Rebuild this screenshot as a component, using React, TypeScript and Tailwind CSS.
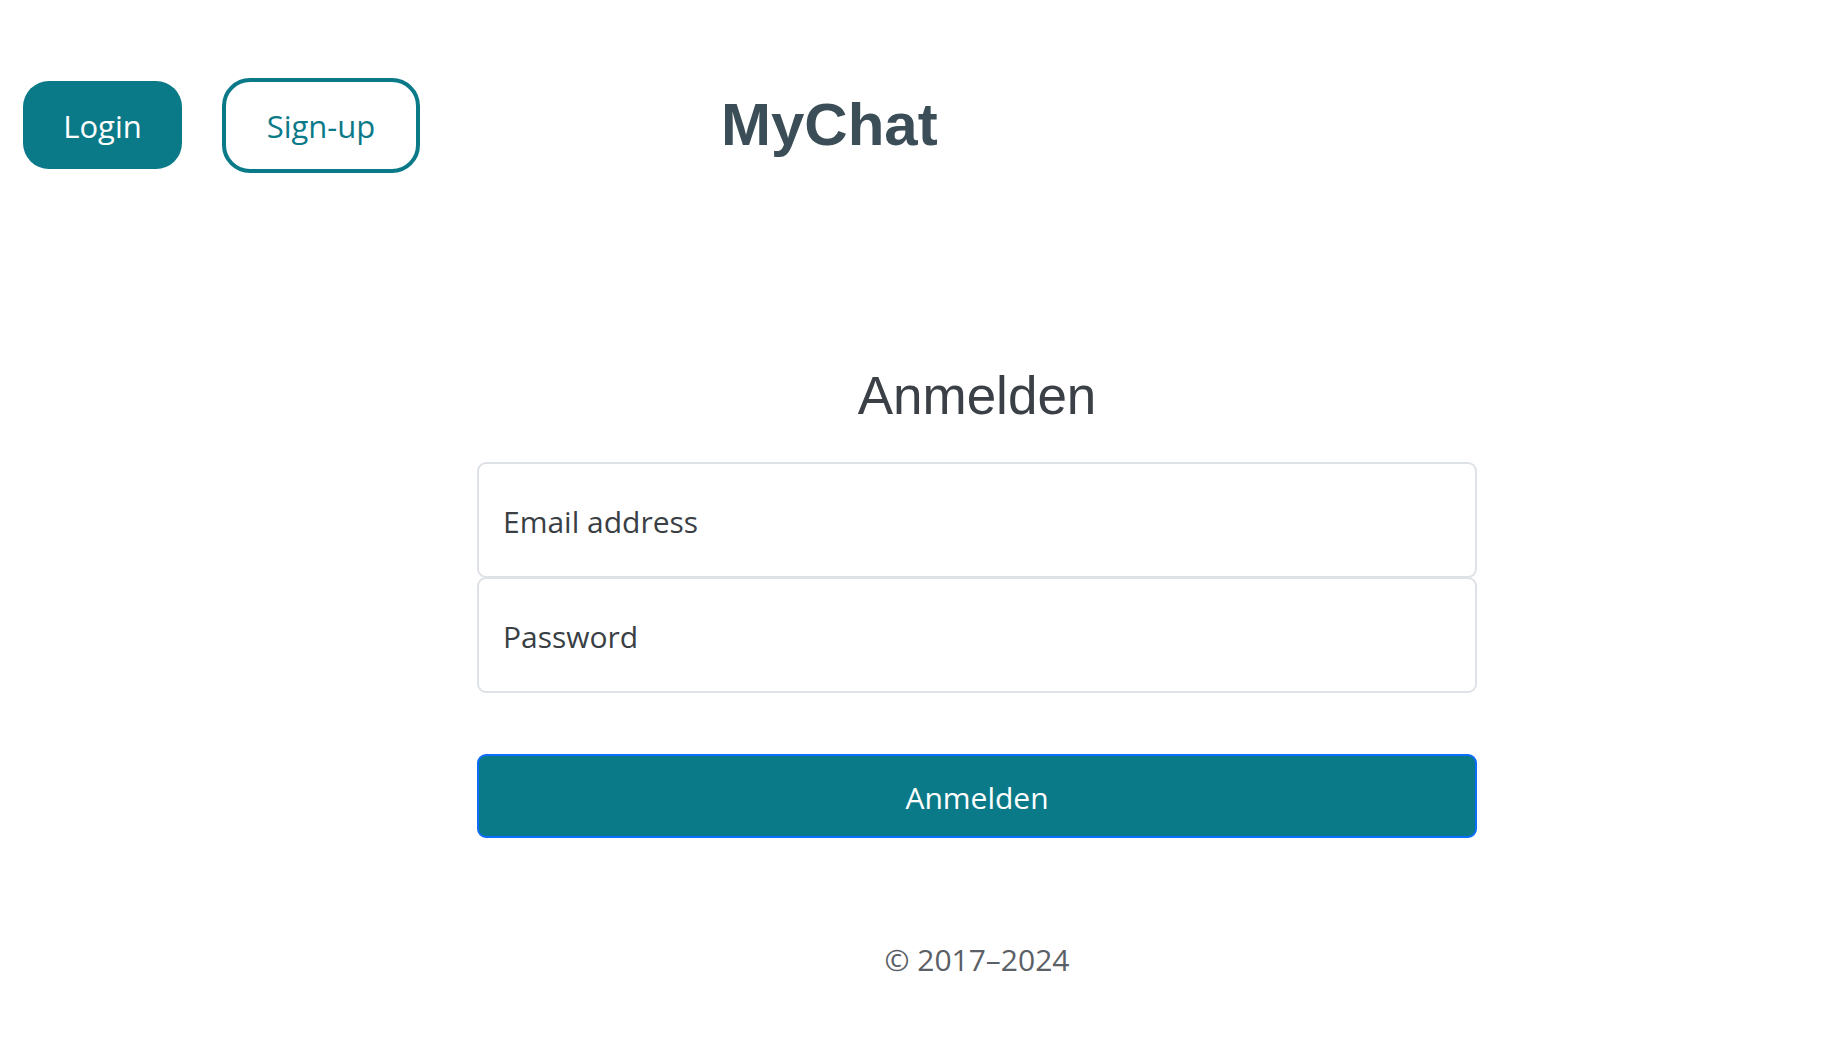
import { type FC, useState } from "react";

const sans = "font-['Open_Sans','Lato',sans-serif]";

const App: FC = () => {
  const [email, setEmail] = useState("");
  const [password, setPassword] = useState("");

  return (
    <div className="min-h-screen bg-white flex flex-col">
      {/* Kopfzeile */}
      <header className="h-[250px] flex items-center pl-[23px]">
        <button
          className={`${sans} h-[88px] w-[159px] pt-[3px] rounded-[26px] bg-[#0b7a88] text-white text-[31px] leading-none`}
        >
          Login
        </button>
        <button
          className={`${sans} ml-[40px] h-[95px] w-[198px] pt-[3px] rounded-[28px] border-[4px] border-[#0b7a88] bg-white text-[#0b7a88] text-[31px] leading-none`}
        >
          Sign-up
        </button>
        <h1 className="ml-[301px] font-['Liberation_Sans',Arial,sans-serif] font-bold text-[60px] leading-none text-[#3b4e57]">
          MyChat
        </h1>
      </header>

      {/* Formular */}
      <main className="ml-[477px] w-[1000px] flex flex-col">
        <h2 className="mt-[114px] text-center font-['Liberation_Sans',Arial,sans-serif] text-[53px] leading-[64px] text-[#3b4046]">
          Anmelden
        </h2>

        <div className="mt-[34px] flex flex-col">
          <input
            type="email"
            value={email}
            onChange={(e) => setEmail(e.target.value)}
            placeholder="Email address"
            className={`${sans} h-[116px] w-full rounded-[9px] border-2 border-[#dee2e6] px-[24px] pt-[3px] text-[30px] text-[#212529] placeholder:text-[#3a3f45] outline-none`}
          />
          <input
            type="password"
            value={password}
            onChange={(e) => setPassword(e.target.value)}
            placeholder="Password"
            className={`${sans} -mt-px h-[116px] w-full rounded-[9px] border-2 border-[#dee2e6] px-[24px] pt-[3px] text-[30px] text-[#212529] placeholder:text-[#3a3f45] outline-none`}
          />
        </div>

        <button
          className={`${sans} mt-[61px] h-[84px] w-full pt-[3px] rounded-[9px] border-2 border-[#0d6efd] bg-[#0b7a88] text-white text-[30px] leading-none`}
        >
          Anmelden
        </button>

        <p className={`${sans} mt-[98px] text-center text-[30px] leading-[48px] text-[#5a6066]`}>
          © 2017–2024
        </p>
      </main>
    </div>
  );
};

export default App;
